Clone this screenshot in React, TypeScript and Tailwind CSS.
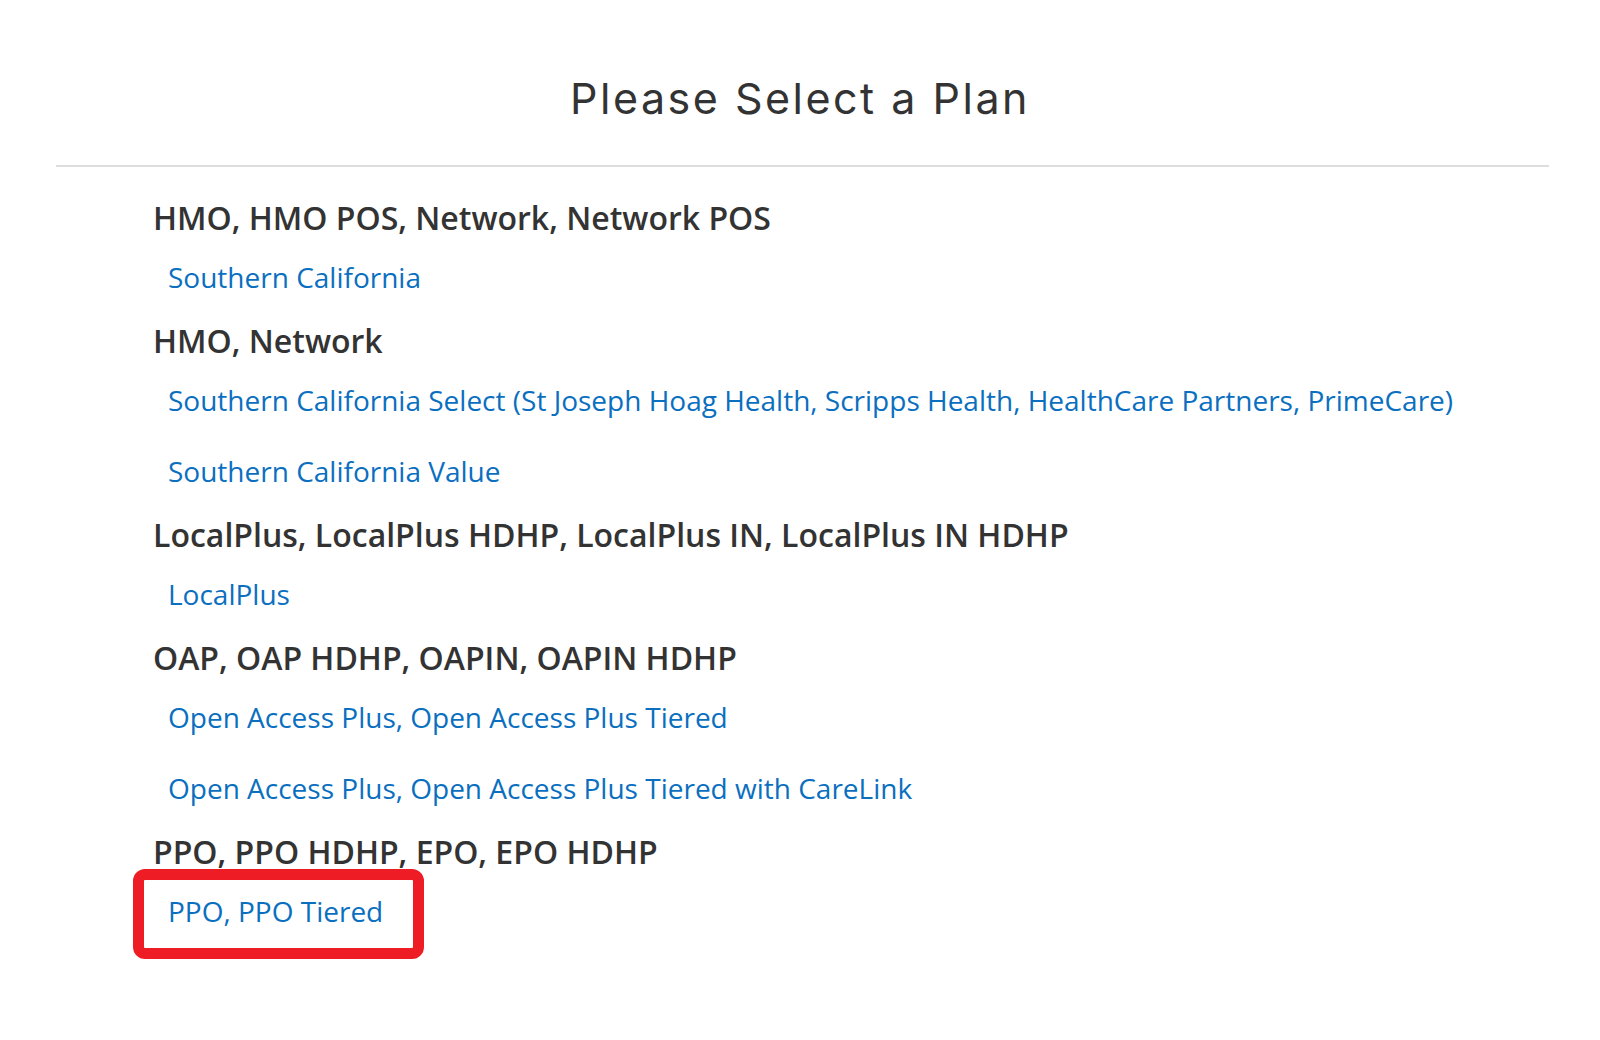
import React from 'react';

type Group = { title: string; plans: string[] };

const groups: Group[] = [
  { title: 'HMO, HMO POS, Network, Network POS', plans: ['Southern California'] },
  {
    title: 'HMO, Network',
    plans: [
      'Southern California Select (St Joseph Hoag Health, Scripps Health, HealthCare Partners, PrimeCare)',
      'Southern California Value',
    ],
  },
  { title: 'LocalPlus, LocalPlus HDHP, LocalPlus IN, LocalPlus IN HDHP', plans: ['LocalPlus'] },
  {
    title: 'OAP, OAP HDHP, OAPIN, OAPIN HDHP',
    plans: ['Open Access Plus, Open Access Plus Tiered', 'Open Access Plus, Open Access Plus Tiered with CareLink'],
  },
  { title: 'PPO, PPO HDHP, EPO, EPO HDHP', plans: ['PPO, PPO Tiered'] },
];

const App: React.FC = () => {
  return (
    <div className="min-h-screen bg-white" style={{ fontFamily: '"Open Sans", sans-serif' }}>
      <h1
        className="pt-[70px] text-center text-[43px] leading-[56px] font-normal tracking-[2.5px] text-[#333]"
        style={{ fontFamily: 'Inter, sans-serif' }}
      >
        Please Select a Plan
      </h1>
      <div className="ml-[56px] mr-[51px] mt-[39px] border-t-2 border-[#dddddd]" />
      <div className="pl-[153px] pt-[22px]">
        {groups.map((group, gi) => (
          <div key={gi}>
            <h2 className="pt-[8px] pb-[3px] text-[32px] leading-[41px] font-semibold text-[#333]">{group.title}</h2>
            {group.plans.map((plan, pi) => {
              const highlighted = plan === 'PPO, PPO Tiered';
              return (
                <div key={pi} className="relative flex h-[71px] items-center pl-[15px]">
                  {highlighted && (
                    <div className="absolute left-[-20px] top-[-6px] h-[90px] w-[291px] rounded-[12px] border-[11px] border-[#ee1c25]" />
                  )}
                  <a href="#" className="relative text-[28px] leading-[38px] text-[#0b6fc0]">
                    {plan}
                  </a>
                </div>
              );
            })}
          </div>
        ))}
      </div>
    </div>
  );
};

export default App;
